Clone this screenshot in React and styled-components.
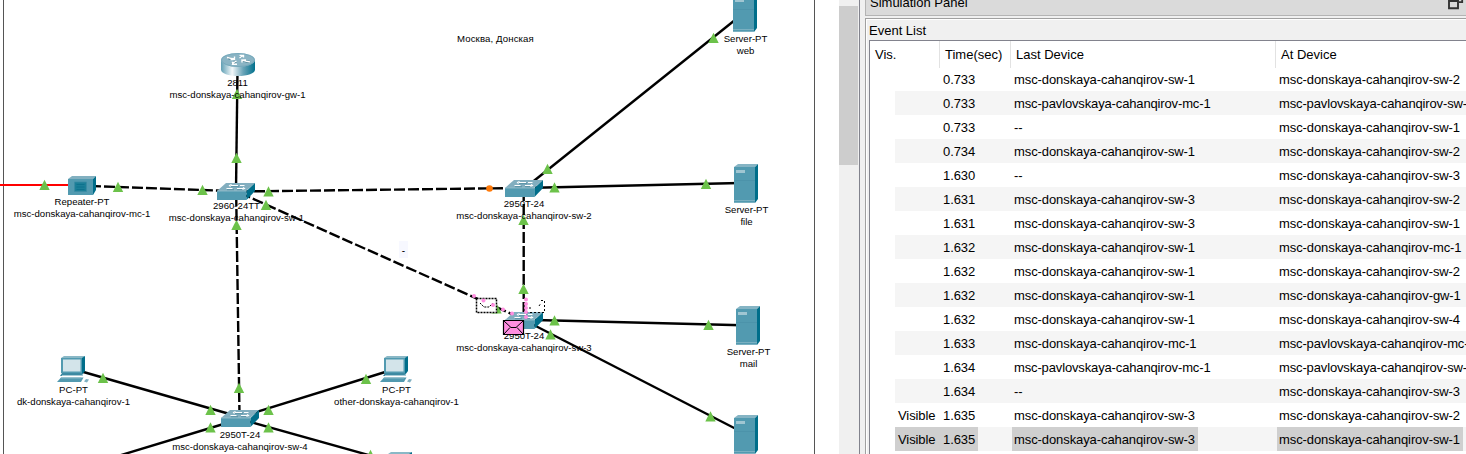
import React from "react";
import styled, { createGlobalStyle, css } from "styled-components";

const Global = createGlobalStyle`
  body { margin: 0; background: #f0f0f0; overflow: hidden; }
  * { box-sizing: border-box; }
`;

const Window = styled.div`
  display: flex;
  width: 1466px;
  height: 454px;
  overflow: hidden;
  font-family: "Liberation Sans", Arial, sans-serif;
  color: #000;
`;

const Workspace = styled.div`
  width: 839px;
  height: 100%;
  padding: 0 24px 0 3px;
  background: #fff;
  position: relative;
  overflow: hidden;
`;

const Sheet = styled.div`
  height: 100%;
  border: solid #555;
  border-width: 0 1px;
`;

const Wires = styled.svg`
  position: absolute;
  inset: 0;
`;

const Node = styled.div`
  position: absolute;
  left: ${(p) => p.$x}px;
  top: ${(p) => p.$y}px;
  width: 0;
  display: flex;
  flex-direction: column;
  align-items: center;
`;

const Label = styled.span`
  font-size: 9.6px;
  line-height: 12px;
  white-space: nowrap;
`;

const Note = styled(Label)`
  position: absolute;
  left: 457px;
  top: 33px;
  letter-spacing: 0.12px;
`;

const Hint = styled.div`
  position: absolute;
  left: 399px;
  top: 241px;
  width: 9px;
  height: 17px;
  background: #f7f8ff;
  font-size: 10px;
  line-height: 19px;
  text-align: center;
`;

const ScrollTrack = styled.div`
  width: 20px;
  height: 100%;
  padding-top: 6px;
  background: #f0f0f0;
`;

const ScrollThumb = styled.div`
  width: 19px;
  height: 159px;
  background: #cdcdcd;
`;

const Dock = styled.div`
  width: 607px;
  height: 100%;
  padding-left: 5px;
  border-left: 1px solid #82838d;
  background: #f0f0f0;
`;

const DockTitle = styled.div`
  display: flex;
  justify-content: space-between;
  height: 16px;
  padding: 0 2px 0 4px;
  margin-bottom: 2px;
  background: #dadada;
  border-bottom: 1px solid #b4b4b4;
  border-left: 1px solid #b4b4b4;
  font-size: 13px;
  line-height: 15px;
`;

const TitleText = styled.span`
  margin-top: -5px;
`;

const Group = styled.div`
  height: 436px;
  padding-left: 3px;
  border: solid #a0a0a0;
  border-width: 1px 0 0 1px;
  box-shadow: inset 1px 1px 0 #fff;
`;

const GroupTitle = styled.div`
  height: 21px;
  font-size: 13px;
  line-height: 23px;
`;

const Table = styled.div`
  height: 415px;
  background: #fff;
  border: solid #82838d;
  border-width: 1px 0 0 1px;
`;

const columns = css`
  display: grid;
  grid-template-columns: 70px 71px 265px 1fr;
`;

const HeaderRow = styled.div`
  ${columns}
  height: 26px;
`;

const HeaderCell = styled.div`
  padding-left: 5px;
  font-size: 13px;
  line-height: 27px;
  white-space: nowrap;
  border-right: ${(p) => (p.$last ? "none" : "1px solid #e2e2e2")};
`;

const Row = styled.div`
  display: grid;
  grid-template-columns: 46px 71px 265px 1fr;
  height: 24px;
  margin-left: 25px;
  background: ${(p) => (p.$alt ? "#f5f5f5" : "#fff")};
`;

const Cell = styled.div`
  display: flex;
  overflow: hidden;
`;

const CellText = styled.span`
  padding: 0 3px 0 2px;
  font-size: 13px;
  line-height: 25px;
  letter-spacing: ${(p) => (p.$tight ? "-0.14px" : "-0.09px")};
  white-space: nowrap;
  background: ${(p) => (p.$selected ? "#cfcfcf" : "transparent")};
`;

const VisCell = styled(Cell)`
  background: ${(p) => (p.$selected ? "#cfcfcf" : "transparent")};
  padding-left: 1px;
`;

const RouterIcon = () => (
  <svg width="34" height="23" viewBox="0 0 34 23">
    <defs>
      <linearGradient id="router-side">
        <stop offset="0" stopColor="#5f9fb4" />
        <stop offset=".33" stopColor="#f3f8fa" />
        <stop offset=".65" stopColor="#6aa4b8" />
        <stop offset="1" stopColor="#00708c" />
      </linearGradient>
    </defs>
    <path d="M0 7v9.500C0 20.500 7.500 23 17 23s17-2.500 17-6.500V7z" fill="url(#router-side)" />
    <ellipse cx="17" cy="7" rx="17" ry="7" fill="#8ab4c4" />
    <ellipse cx="17" cy="7" rx="16.500" ry="6.500" fill="none" stroke="#6fa5b8" strokeWidth=".7" />
    <g stroke="#1d5c70" strokeWidth="2" fill="none">
      <path d="M7 5l7 1.500M21 7.500l8 1.500M19 4.500l3-2M15 8.500l-4 2.500" />
    </g>
    <g stroke="#fff" strokeWidth="1.400" fill="none">
      <path d="M6 4.500l7.500 1.500M13.500 3.500v3h-4M29 9l-8-1.700M21 9.500V7h4M18.500 5l4-2.700M18.500 2.500h4v2M15.500 8l-4.500 2.700M11.500 8.700v2.500h4.500" />
    </g>
  </svg>
);

const SwitchIcon = () => (
  <svg width="38" height="17" viewBox="0 0 38 17">
    <path d="M0 8L9 0h29l-9 8z" fill="#82aebf" />
    <path d="M0 8h29.500v9H0z" fill="#529ab0" />
    <path d="M29.500 8L38 0v8l-8.500 9z" fill="#006e8a" />
    <path d="M0 8h29.500" stroke="#9bc2cf" strokeWidth=".8" />
    <g stroke="#5f97aa" strokeWidth="1.600" fill="none">
      <path d="M14 3.500h8M10 6.500h7M20 6.500h7" />
    </g>
    <g stroke="#fff" strokeWidth="1.100" fill="none">
      <path d="M14 2.500h7M14.500 1.500l-2 1 1 1M9.500 5.500h6M20 5.500h6M26 4.500l1.500 1-2 1M23 2.500h4.500" />
    </g>
  </svg>
);

const RepeaterIcon = () => (
  <svg width="28" height="19" viewBox="0 0 28 19">
    <path d="M0 3l4-3h24l-3 3z" fill="#82b0c0" />
    <path d="M25 3l3-3v14l-3 5z" fill="#006e8a" />
    <path d="M0 3h25v16H0z" fill="#529ab0" />
    <path d="M6.500 6h12v9.500h-12z" fill="#1b7f98" stroke="#3b8ca3" strokeWidth=".8" />
    <path d="M8.500 8.500h8M8.500 11h8M8.500 13.500h8" stroke="#0b6f8a" strokeWidth=".8" />
  </svg>
);

const ServerIcon = () => (
  <svg width="24" height="39" viewBox="0 0 24 39">
    <path d="M0 3l4-3h20l-3 3z" fill="#85b4c4" />
    <path d="M21 3l3-3v35l-3 4z" fill="#006e8a" />
    <path d="M0 3h21v36H0z" fill="#529ab0" />
    <path d="M2 6h9v3H2z" fill="#a0c6d2" />
    <path d="M0 16.500h21" stroke="#488fa6" strokeWidth=".6" />
    <path d="M0 36.500h21M0 38.500h21" stroke="#7fb2c3" strokeWidth=".9" />
  </svg>
);

const PcIcon = () => (
  <svg width="33" height="27" viewBox="0 0 33 27">
    <path d="M4 2l3-2h21l-2 2z" fill="#8ab8c6" />
    <path d="M25 2l3-2v15l-3 4z" fill="#006e8a" />
    <path d="M4 2h21v15H4z" fill="#529ab0" />
    <path d="M6 3.500h17.500V15.500H6z" fill="#d3e4ea" />
    <path d="M5 17h21l-2 3H3z" fill="#3d8aa2" />
    <path d="M5 19.500h21" stroke="#a9cbd6" />
    <path d="M4 21.500h22.500L24 26H0z" fill="#529ab0" />
    <path d="M4 22h20" stroke="#8ab8c6" />
    <path d="M29 23l3 .5-2 3-3-1z" fill="#7fb0c1" />
  </svg>
);

const RestoreIcon = () => (
  <svg width="17" height="10" viewBox="0 0 17 10">
    <path d="M2 0v8.200h9V0M2 1h9" fill="none" stroke="#333" strokeWidth="1.900" />
    <path d="M12 2.200h3.200V0" fill="none" stroke="#333" strokeWidth="1.800" />
  </svg>
);

const solidLinks = [
  [237.5, 70, 236, 190], [530, 184, 740, 16], [535, 187.7, 740, 183],
  [535, 320, 742, 325.2], [525, 320.5, 740, 431], [240, 417, 80, 371],
  [240, 417, 390, 370.5], [240, 419, 118, 456], [240, 419, 372, 456],
];
const dashedLinks = [
  [90, 186, 236, 191.2], [523.7, 190, 523.7, 318],
  [240, 193, 524, 319.5], [236.2, 195, 239.5, 415], [240, 191.5, 520, 188],
];
const upMarks = [
  [44.5, 185], [118, 187], [202.5, 190], [236.5, 158], [237, 94], [268.5, 191.5],
  [266, 205], [236.5, 225], [547.5, 169], [554.5, 187.5], [523.5, 220], [523.5, 289],
  [554.5, 320.5], [550.5, 334.5], [713.5, 38], [706, 184], [708.5, 325], [710.5, 416.5],
  [103, 378], [210.5, 410], [210.5, 427.5], [268.5, 410], [268.5, 427.5], [366, 379],
  [239, 388], [370.5, 455], [496.5, 308.5],
];

const deviceIcons = { router: RouterIcon, sw: SwitchIcon, rep: RepeaterIcon, server: ServerIcon, pc: PcIcon };

const devices = [
  { kind: "router", x: 238, y: 53, lx: 237.5, ly: 77, labels: ["2811", "msc-donskaya-cahanqirov-gw-1"] },
  { kind: "rep", x: 82, y: 176, lx: 82, ly: 196, labels: ["Repeater-PT", "msc-donskaya-cahanqirov-mc-1"] },
  { kind: "sw", x: 236, y: 183, lx: 236.5, ly: 200, labels: ["2960-24TT", "msc-donskaya-cahanqirov-sw-1"] },
  { kind: "sw", x: 524, y: 180, lx: 524, ly: 198, labels: ["2950T-24", "msc-donskaya-cahanqirov-sw-2"] },
  { kind: "sw", x: 524, y: 312, lx: 524, ly: 330, labels: ["2950T-24", "msc-donskaya-cahanqirov-sw-3"] },
  { kind: "sw", x: 240, y: 410, lx: 240, ly: 429, labels: ["2950T-24", "msc-donskaya-cahanqirov-sw-4"] },
  { kind: "server", x: 745, y: -7, lx: 745.5, ly: 33, labels: ["Server-PT", "web"] },
  { kind: "server", x: 746, y: 164, lx: 746.5, ly: 204, labels: ["Server-PT", "file"] },
  { kind: "server", x: 748, y: 306, lx: 748.5, ly: 346, labels: ["Server-PT", "mail"] },
  { kind: "server", x: 746, y: 415, labels: [] },
  { kind: "pc", x: 73.5, y: 356, lx: 73.5, ly: 384, labels: ["PC-PT", "dk-donskaya-cahanqirov-1"] },
  { kind: "pc", x: 396.5, y: 356, lx: 396.5, ly: 384, labels: ["PC-PT", "other-donskaya-cahanqirov-1"] },
  { kind: "pc", x: 400.5, y: 452, labels: [] },
];

const sw = (n) => "msc-donskaya-cahanqirov-sw-" + n;
const events = [
  ["", "0.733", sw(1), sw(2)],
  ["", "0.733", "msc-pavlovskaya-cahanqirov-mc-1", "msc-pavlovskaya-cahanqirov-sw-1"],
  ["", "0.733", "--", sw(1)],
  ["", "0.734", sw(1), sw(2)],
  ["", "1.630", "--", sw(3)],
  ["", "1.631", sw(3), sw(2)],
  ["", "1.631", sw(3), sw(1)],
  ["", "1.632", sw(1), "msc-donskaya-cahanqirov-mc-1"],
  ["", "1.632", sw(1), sw(2)],
  ["", "1.632", sw(1), "msc-donskaya-cahanqirov-gw-1"],
  ["", "1.632", sw(1), sw(4)],
  ["", "1.633", "msc-donskaya-cahanqirov-mc-1", "msc-pavlovskaya-cahanqirov-mc-1"],
  ["", "1.634", "msc-pavlovskaya-cahanqirov-mc-1", "msc-pavlovskaya-cahanqirov-sw-1"],
  ["", "1.634", "--", sw(3)],
  ["Visible", "1.635", sw(3), sw(2)],
  ["Visible", "1.635", sw(3), sw(1)],
];

const Links = () => (
  <Wires width="839" height="454">
    <path d="M0 185H70" stroke="#f00" strokeWidth="2" />
    <g stroke="#000" strokeWidth="2.400">
      {solidLinks.map(([a, b, c, d], i) => <line key={i} x1={a} y1={b} x2={c} y2={d} />)}
      {dashedLinks.map(([a, b, c, d], i) => (
        <line key={i} x1={a} y1={b} x2={c} y2={d} strokeDasharray="11 3" />
      ))}
    </g>
  </Wires>
);

const Marks = () => (
  <Wires width="839" height="454">
    {upMarks.map(([x, y], i) => (
      <path key={i} d={`M${x} ${y - 5.3}l5.2 10.300h-10.400z`} fill="#6cc24a" />
    ))}
    <circle cx="489.500" cy="188.500" r="3.300" fill="#ff7a0a" />
  </Wires>
);

const Packets = () => (
  <Wires width="839" height="454">
    <path d="M476 298h21v15h-21z" fill="#fff" />
    <g fill="none" stroke="#000" strokeWidth="1.500" strokeDasharray="2 1">
      <path d="M476.500 298.500h20v14h-20z" />
      <path d="M480 303l4 4h5l4-4" strokeWidth="1" />
    </g>
    <g fill="none" stroke="#000" strokeDasharray="2 2">
      <path d="M541 300.500h3.500v12H527M529 308h4M539 306l2-3" />
    </g>
    <g fill="#ff8ee0">
      {[[474, 296], [483.5, 300.5], [493, 305], [503, 309.5], [512, 313.5],
        [526, 299.5], [526, 304], [526, 308], [526, 312], [526, 317]].map(([x, y], i) => (
        <circle key={i} cx={x} cy={y} r="2" />
      ))}
    </g>
    <path d="M503.500 320.500h20v14h-20z" fill="#ff8ee0" stroke="#000" strokeWidth="1.200" />
    <path d="M504 321l7 6.500h5l7-6.500M504 334l6-6.500M523 334l-6-6.500" fill="none" stroke="#000" />
  </Wires>
);

export default function App() {
  return (
    <Window>
      <Global />
      <Workspace>
        <Sheet />
        <Links />
        {devices.map((d, i) => {
          const Icon = deviceIcons[d.kind];
          return <Node key={i} $x={d.x} $y={d.y}><Icon /></Node>;
        })}
        <Marks />
        {devices.filter((d) => d.labels.length).map((d, i) => (
          <Node key={i} $x={d.lx} $y={d.ly}>
            {d.labels.map((t) => <Label key={t}>{t}</Label>)}
          </Node>
        ))}
        <Packets />
        <Note>Москва, Донская</Note>
        <Hint>-</Hint>
      </Workspace>
      <ScrollTrack><ScrollThumb /></ScrollTrack>
      <Dock>
        <DockTitle><TitleText>Simulation Panel</TitleText><RestoreIcon /></DockTitle>
        <Group>
          <GroupTitle>Event List</GroupTitle>
          <Table>
            <HeaderRow>
              <HeaderCell>Vis.</HeaderCell>
              <HeaderCell>Time(sec)</HeaderCell>
              <HeaderCell>Last Device</HeaderCell>
              <HeaderCell $last>At Device</HeaderCell>
            </HeaderRow>
            {events.map(([vis, time, last, at], i) => {
              const selected = i === events.length - 1;
              return (
                <Row key={i} $alt={i % 2 === 1}>
                  <VisCell $selected={selected}><CellText>{vis}</CellText></VisCell>
                  <Cell><CellText $selected={selected}>{time}</CellText></Cell>
                  <Cell><CellText $selected={selected} $tight={last.includes("pavl")}>{last}</CellText></Cell>
                  <Cell><CellText $selected={selected} $tight={at.includes("pavl")}>{at}</CellText></Cell>
                </Row>
              );
            })}
          </Table>
        </Group>
      </Dock>
    </Window>
  );
}
